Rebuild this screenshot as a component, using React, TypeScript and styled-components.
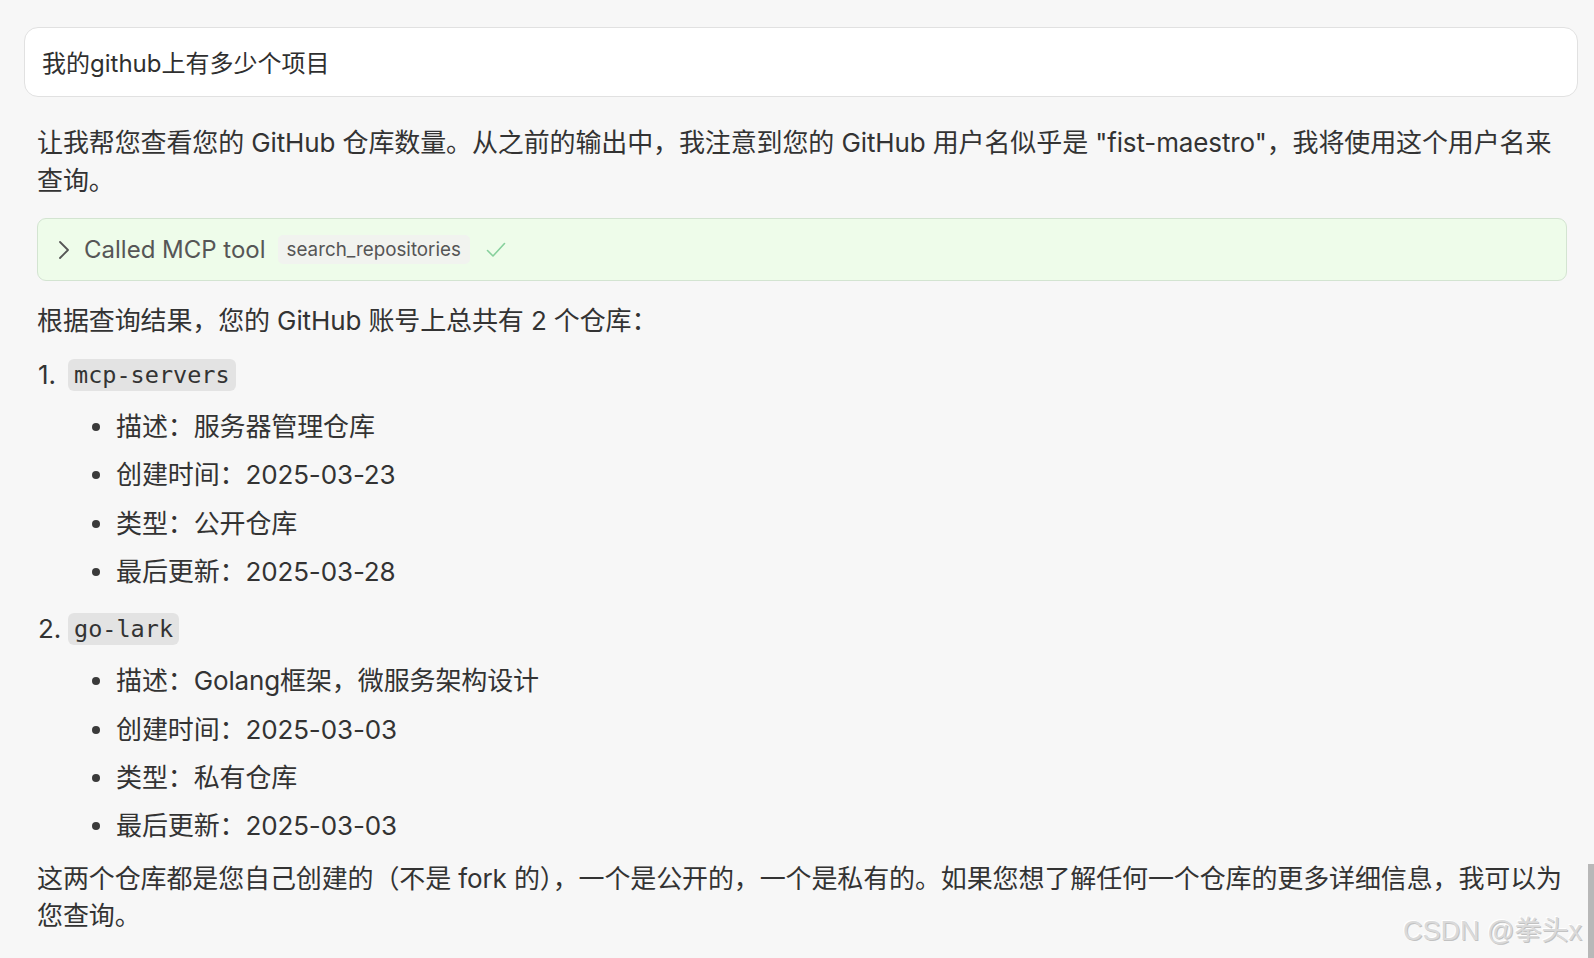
import React from "react";
import styled, { createGlobalStyle } from "styled-components";

const GlobalStyle = createGlobalStyle`
  html, body {
    margin: 0;
    padding: 0;
    background: #f7f7f7;
    overflow: hidden;
  }
  body {
    font-family: Inter, "Noto Sans CJK SC", sans-serif;
    color: #333333;
  }
  * { box-sizing: border-box; }
`;

const Page = styled.div`
  position: relative;
  width: 1594px;
  height: 958px;
  overflow: hidden;
  padding: 27px 16px 0 24px;
`;

const PromptBox = styled.div`
  height: 70px;
  background: #ffffff;
  border: 1.5px solid #e1e1e1;
  border-radius: 14px;
  display: flex;
  align-items: center;
  padding: 0 17px 2px 17px;
  font-size: 24px;
  color: #2f2f2f;
`;

const Answer = styled.div`
  padding: 0 11px 0 13px;
  font-size: 26px;
  line-height: 37.6px;
  letter-spacing: -0.12px;
  color: #333333;
`;

const Para = styled.p<{ $top: number }>`
  margin: ${(p) => p.$top}px 0 0 0;
`;

const ToolBox = styled.div`
  margin-top: 19px;
  height: 63px;
  background: #eefcea;
  border: 1.5px solid #d3e4d1;
  border-radius: 9px;
  display: flex;
  align-items: center;
  padding: 0 0 0 20px;
  letter-spacing: 0;
`;

const ToolLabel = styled.span`
  font-size: 24px;
  color: #565656;
  margin-left: 14px;
  margin-right: 12px;
`;

const ToolBadge = styled.span`
  font-size: 18.8px;
  color: #555;
  background: #f1f3ef;
  border-radius: 5px;
  height: 29px;
  line-height: 29px;
  padding: 0 9px;
`;

const CheckWrap = styled.span`
  display: flex;
  margin-left: 16px;
`;

const OrderedList = styled.ol`
  list-style: none;
  margin: 16px 0 0 0;
  padding: 0;
  display: flex;
  flex-direction: column;
  gap: 19px;
`;

const ItemHead = styled.div`
  display: flex;
  align-items: center;
  height: 37.6px;
`;

const Num = styled.span`
  margin-left: 1px;
  width: 30px;
`;

const Code = styled.code`
  font-family: "DejaVu Sans Mono", "Liberation Mono", monospace;
  font-size: 23.5px;
  letter-spacing: 0;
  background: #e3e3e3;
  border-radius: 6px;
  height: 32px;
  line-height: 32px;
  padding: 0 6px;
  color: #333;
`;

const BulletList = styled.ul`
  list-style: none;
  margin: 14.5px 0 0 0;
  padding: 0 0 0 79px;
  display: flex;
  flex-direction: column;
  gap: 10.9px;
`;

const Bullet = styled.li`
  position: relative;
  &::before {
    content: "";
    position: absolute;
    left: -24px;
    top: 15px;
    width: 8px;
    height: 8px;
    border-radius: 50%;
    background: #3a3a3a;
  }
`;

const Watermark = styled.div`
  position: absolute;
  left: 1403px;
  top: 918px;
  line-height: 27px;
  font-family: "Liberation Sans", "Noto Sans CJK SC", sans-serif;
  font-size: 27px;
  white-space: nowrap;
  color: #dadada;
  text-shadow: 1px 1px 0 #c2c2c2, -1px -1px 0 #ffffff;
`;

const ScrollThumb = styled.div`
  position: absolute;
  right: 0;
  top: 864px;
  width: 6px;
  height: 94px;
  background: #b8b8b8;
`;

const Chevron = () => (
  <svg width="12" height="20" viewBox="0 0 12 20" fill="none">
    <path d="M2 2 L10 10 L2 18" stroke="#555" strokeWidth="1.8" strokeLinecap="round" strokeLinejoin="round" />
  </svg>
);

const Check = () => (
  <svg width="20" height="16" viewBox="0 0 20 16" fill="none">
    <path d="M1.5 8.5 L7 14 L18.5 1.5" stroke="#86d09c" strokeWidth="1.6" strokeLinecap="round" strokeLinejoin="round" />
  </svg>
);

type Repo = { name: string; details: string[] };

const repos: Repo[] = [
  {
    name: "mcp-servers",
    details: ["描述：服务器管理仓库", "创建时间：2025-03-23", "类型：公开仓库", "最后更新：2025-03-28"],
  },
  {
    name: "go-lark",
    details: ["描述：Golang框架，微服务架构设计", "创建时间：2025-03-03", "类型：私有仓库", "最后更新：2025-03-03"],
  },
];

export default function App() {
  return (
    <>
      <GlobalStyle />
      <Page>
        <PromptBox>我的github上有多少个项目</PromptBox>
        <Answer>
          <Para $top={27}>
            让我帮您查看您的 GitHub 仓库数量。从之前的输出中，我注意到您的 GitHub 用户名似乎是 "fist-maestro"，我将使用这个用户名来查询。
          </Para>
          <ToolBox>
            <Chevron />
            <ToolLabel>Called MCP tool</ToolLabel>
            <ToolBadge>search_repositories</ToolBadge>
            <CheckWrap>
              <Check />
            </CheckWrap>
          </ToolBox>
          <Para $top={21}>根据查询结果，您的 GitHub 账号上总共有 2 个仓库：</Para>
          <OrderedList>
            {repos.map((r, i) => (
              <li key={r.name}>
                <ItemHead>
                  <Num>{i + 1}.</Num>
                  <Code>{r.name}</Code>
                </ItemHead>
                <BulletList>
                  {r.details.map((d) => (
                    <Bullet key={d}>{d}</Bullet>
                  ))}
                </BulletList>
              </li>
            ))}
          </OrderedList>
          <Para $top={14.5}>
            这两个仓库都是您自己创建的（不是 fork 的），一个是公开的，一个是私有的。如果您想了解任何一个仓库的更多详细信息，我可以为您查询。
          </Para>
        </Answer>
        <Watermark>CSDN @拳头x</Watermark>
        <ScrollThumb />
      </Page>
    </>
  );
}
